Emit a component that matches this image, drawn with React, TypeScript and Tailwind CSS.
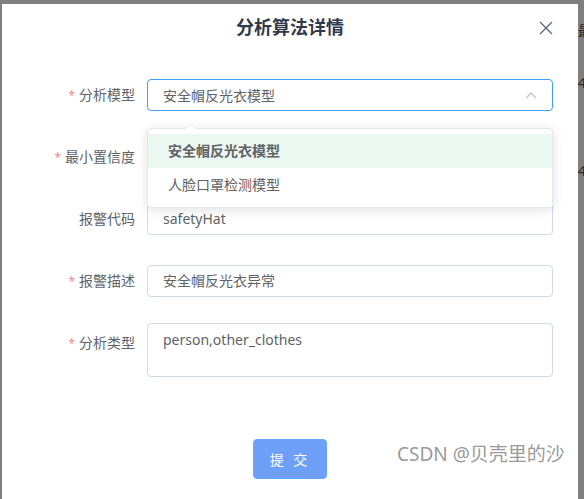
// Analysis algorithm detail dialog — select dropdown open over the form
const FONT = { fontFamily: '"Noto Sans", "Noto Sans CJK SC", sans-serif' }

function Label({ text, required }: { text: string; required?: boolean }) {
  return (
    <div className="h-[32px] w-[125px] shrink-0 overflow-hidden pr-[12px] text-right text-[14px] leading-[32px] text-[#606266]">
      {required && <span className="mr-[4px] text-[12px] text-[#f78989]">*</span>}
      {text}
    </div>
  )
}

function Input({ value }: { value: string }) {
  return (
    <div className="flex-1 h-[32px] overflow-hidden rounded-[4px] border border-[#d3dae6] bg-white px-[15px] text-[14px] leading-[30px] text-[#606266]">
      {value}
    </div>
  )
}

export default function App() {
  return (
    <div className="relative flex h-[499px] w-[584px] overflow-hidden bg-[#7f7f7f] pl-[2px] pt-[4px]" style={FONT}>
      {/* dialog */}
      <div className="relative w-[576px] shrink-0 bg-white">
        {/* header */}
        <div className="relative flex h-[56px] items-start justify-center pt-[11px]">
          <span className="text-[18px] font-bold leading-[24px] text-[#2f3a4c]">分析算法详情</span>
          <button className="absolute right-[24px] top-[16px] flex h-[16px] w-[16px] items-center justify-center">
            <svg width="14" height="14" viewBox="0 0 14 14" fill="none" stroke="#5f6878" strokeWidth="1.4">
              <path d="M1 1L13 13M13 1L1 13" />
            </svg>
          </button>
        </div>

        {/* form */}
        <div className="pl-[20px] pr-[25px] pt-[19px]">
          <div className="mb-[30px] flex">
            <Label text="分析模型" required />
            <div className="flex h-[32px] flex-1 items-center justify-between rounded-[4px] border border-[#409eff] px-[15px] text-[14px] text-[#606266]">
              <span>安全帽反光衣模型</span>
              <svg width="12" height="8" viewBox="0 0 12 8" fill="none" stroke="#c0c4cc" strokeWidth="1.3">
                <path d="M1 7L6 2L11 7" />
              </svg>
            </div>
          </div>
          <div className="mb-[30px] flex">
            <Label text="最小置信度" required />
            <Input value="" />
          </div>
          <div className="mb-[30px] flex">
            <Label text="报警代码" />
            <Input value="safetyHat" />
          </div>
          <div className="mb-[26px] flex">
            <Label text="报警描述" required />
            <Input value="安全帽反光衣异常" />
          </div>
          <div className="flex">
            <div className="pt-[4px]">
              <Label text="分析类型" required />
            </div>
            <div className="h-[54px] flex-1 rounded-[4px] border border-[#d3dae6] px-[15px] pt-[6px] text-[14px] leading-[20px] text-[#606266]">
              person,other_clothes
            </div>
          </div>
        </div>

        <div className="flex justify-center pt-[62px]">
          <button className="h-[40px] w-[74px] rounded-[4px] border border-[#66a6ff] bg-[#6ea0f7] text-[14px] tracking-[3px] text-white">
            提 交
          </button>
        </div>

        {/* dropdown popper */}
        <div className="absolute left-[145px] top-[124px] w-[406px] rounded-[4px] border border-[#e4e7ed] bg-white py-[5px] shadow-[0_2px_12px_rgba(0,0,0,0.12)]">
          <div className="absolute -top-[6px] left-[37px] h-0 w-0 border-x-[6px] border-b-[6px] border-x-transparent border-b-[#e4e7ed]" />
          <div className="absolute -top-[5px] left-[37px] h-0 w-0 border-x-[6px] border-b-[6px] border-x-transparent border-b-white" />
          <div className="h-[34px] bg-[#eaf8f1] px-[20px] text-[14px] font-bold leading-[34px] text-[#606266]">安全帽反光衣模型</div>
          <div className="h-[34px] px-[20px] text-[14px] leading-[34px] text-[#606266]">人脸口罩检测模型</div>
        </div>
      </div>

      {/* background page peeking out on the right */}
      <div className="flex flex-1 flex-col overflow-hidden text-[14px] text-[#2a2a2a]">
        <div className="mt-[20px] h-[14px] leading-[14px]">最</div>
        <div className="mt-[38px] leading-[14px]">4</div>
        <div className="mt-[74px] leading-[14px]">4</div>
      </div>

      {/* watermark */}
      <div className="absolute left-[397px] top-[440px] text-[19px] text-[#9a9a9a] [text-shadow:0_0_1px_#fff]">
        CSDN @贝壳里的沙
      </div>
    </div>
  )
}
